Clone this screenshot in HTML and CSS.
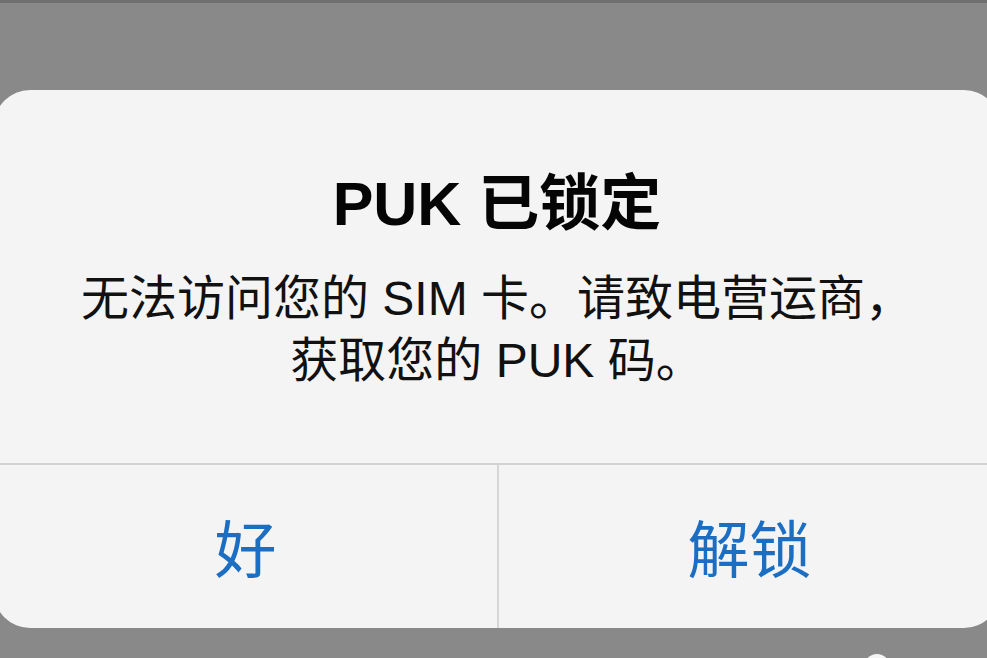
FILE: index.html
```html
<!DOCTYPE html>
<html lang="zh-CN">
<head>
<meta charset="utf-8">
<title>PUK 已锁定</title>
<link rel="stylesheet" href="styles.css">
</head>
<body>
<div class="screen">
  <div class="alert">
    <div class="alert-body">
      <h1 class="alert-title">PUK 已锁定</h1>
      <p class="alert-message">无法访问您的 SIM 卡。请致电营运商，<br>获取您的 PUK 码。</p>
    </div>
    <div class="alert-actions">
      <div class="alert-button">好</div>
      <div class="alert-button alert-button-right">解锁</div>
    </div>
  </div>
  <div class="home-dot"></div>
</div>
</body>
</html>
```

FILE: styles.css
```css
html, body {
  margin: 0;
  padding: 0;
}
body {
  background: #898989;
  font-family: "Liberation Sans", "Noto Sans CJK SC", sans-serif;
}
.screen {
  position: relative;
  width: 987px;
  height: 658px;
  overflow: hidden;
  box-sizing: border-box;
  border-top: 3px solid #6f6f6f;
  padding-top: 87px;
  background: #898989;
}
.alert {
  width: 1006px;
  height: 538px;
  margin-left: -6px;
  background: #f4f4f4;
  border-radius: 36px;
  display: flex;
  flex-direction: column;
  overflow: hidden;
}
.alert-body {
  height: 375px;
  box-sizing: border-box;
  padding-top: 78px;
  border-bottom: 2px solid #d2d2d2;
  text-align: center;
}
.alert-title {
  margin: 0;
  font-size: 61px;
  line-height: 72px;
  font-weight: bold;
  color: #050505;
  font-family: "Liberation Sans", "Noto Sans CJK SC", sans-serif;
}
.alert-message {
  margin: 28px 0 0;
  font-size: 48px;
  line-height: 62px;
  color: #111111;
}
.alert-actions {
  flex: 1;
  display: grid;
  grid-template-columns: 1fr 1fr;
}
.alert-button {
  display: flex;
  align-items: center;
  justify-content: center;
  font-size: 62px;
  color: #1b6ec2;
  padding-bottom: 2px;
}
.alert-button-right {
  border-left: 2px solid #d6d6d6;
}
.home-dot {
  position: absolute;
  left: 864px;
  top: 651px;
  width: 26px;
  height: 26px;
  border-radius: 50%;
  background: #f4f4f4;
}
```
